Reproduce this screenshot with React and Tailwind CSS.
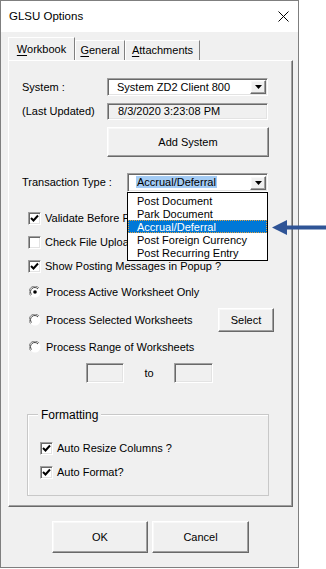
import React from 'react'

const sunken = 'border border-t-[#a0a0a0] border-l-[#a0a0a0] border-r-white border-b-white shadow-[inset_1px_1px_0_#696969,inset_-1px_-1px_0_#e3e3e3]'
const raised = 'border border-t-white border-l-white border-r-[#696969] border-b-[#696969] shadow-[inset_-1px_-1px_0_#a0a0a0,inset_1px_1px_0_#f8f8f8] bg-[#f0f0f0]'

function DropButton() {
  return (
    <div className={`flex h-[14px] w-[16px] items-center justify-center ${raised}`}>
      <svg width="7" height="4" viewBox="0 0 7 4">
        <polygon points="0,0 7,0 3.5,4" fill="#000" />
      </svg>
    </div>
  )
}

function Check({ checked }) {
  return (
    <div className={`flex h-[13px] w-[13px] shrink-0 items-center justify-center bg-white ${sunken}`}>
      {checked && (
        <svg width="9" height="9" viewBox="0 0 9 9">
          <polyline points="1,4 3.5,6.5 8,1.5" fill="none" stroke="#000" strokeWidth="2" />
        </svg>
      )}
    </div>
  )
}

function Radio({ checked }) {
  return (
    <svg width="12" height="12" viewBox="0 0 12 12" className="shrink-0">
      <circle cx="6" cy="6" r="5.5" fill="#fff" />
      <path d="M10 2 A5.5 5.5 0 0 0 1.5 9.5" fill="none" stroke="#808080" strokeWidth="1" />
      <path d="M9 3 A4.2 4.2 0 0 0 2.5 8.5" fill="none" stroke="#404040" strokeWidth="1" />
      {checked && <circle cx="6" cy="6" r="1.8" fill="#000" />}
    </svg>
  )
}

// clip: label is partly covered by the open dropdown list, so cut it at the list edge
function CheckRow({ checked, label, className = '', clip }) {
  return (
    <div className={`flex h-[16px] items-center gap-[4px] ${className}`}>
      <Check checked={checked} />
      <span className={`whitespace-nowrap ${clip ? 'max-w-[82px] overflow-hidden' : ''}`}>{label}</span>
    </div>
  )
}

function RadioRow({ checked, label }) {
  return (
    <div className="flex h-[16px] items-center gap-[5px] pl-[7px]">
      <Radio checked={checked} />
      <span className="whitespace-nowrap">{label}</span>
    </div>
  )
}

function Tab({ label, selected }) {
  const [first, ...rest] = label
  return (
    <div
      className={`flex items-center justify-center border-t border-l border-t-white border-l-white border-r border-r-[#808080] ${
        selected ? 'h-[23px]' : 'h-[20px]'
      }`}
    >
      <span>
        <span className="underline underline-offset-2">{first}</span>
        {rest.join('')}
      </span>
    </div>
  )
}

const options = ['Post Document', 'Park Document', 'Accrual/Deferral', 'Post Foreign Currency', 'Post Recurring Entry']

export default function App() {
  return (
    <div className="relative flex h-[569px] w-[326px] bg-white font-['Liberation_Sans',Arial,sans-serif] text-[11px] text-black">
      <div className="flex h-[568px] w-[299px] flex-col border border-[#7f7f7f]">
        {/* title bar */}
        <div className="flex h-[31px] items-center justify-between bg-white pl-[8px] pr-[9px]">
          <span className="text-[11.5px]">GLSU Options</span>
          <svg width="11" height="11" viewBox="0 0 11 11">
            <path d="M0.5 0.5 L10.5 10.5 M10.5 0.5 L0.5 10.5" stroke="#000" strokeWidth="1" />
          </svg>
        </div>

        <div className="flex flex-1 flex-col bg-[#f0f0f0] pl-[7px] pr-[5px]">
          {/* tabs */}
          <div className="flex h-[28px] items-end">
            <div className="w-[67px]"><Tab label="Workbook" selected /></div>
            <div className="w-[50px]"><Tab label="General" /></div>
            <div className="w-[75px]"><Tab label="Attachments" /></div>
          </div>

          {/* panel */}
          <div className="flex h-[447px] w-[285px] flex-col border border-t-white border-l-white border-r-[#696969] border-b-[#696969] pl-[13px] shadow-[inset_-1px_-1px_0_#a0a0a0]">
            <div className="mt-[17px] flex h-[18px] items-center">
              <span className="w-[85px]">System :</span>
              <div className={`flex h-[18px] w-[161px] items-center bg-white pr-[1px] ${sunken}`}>
                <span className="flex-1 pl-[9px]">System ZD2 Client 800</span>
                <DropButton />
              </div>
            </div>

            <div className="mt-[7px] flex h-[17px] items-center">
              <span className="w-[85px]">(Last Updated)</span>
              <div className={`flex h-[17px] w-[161px] items-center bg-[#f0f0f0] pl-[10px] ${sunken}`}>
                8/3/2020 3:23:08 PM
              </div>
            </div>

            <div className={`ml-[85px] mt-[7px] flex h-[30px] w-[162px] items-center justify-center ${raised}`}>
              Add System
            </div>

            <div className="mt-[16px] flex h-[19px] items-center">
              <span className="w-[105px]">Transaction Type :</span>
              <div className="relative z-10">
                <div className={`flex h-[19px] w-[141px] items-center bg-white pr-[1px] ${sunken}`}>
                  <span className="flex-1 pl-[8px]">
                    <span className="bg-[#a3cbf4] px-[1px]">Accrual/Deferral</span>
                  </span>
                  <DropButton />
                </div>
                <div className="absolute left-0 top-full w-[141px] border border-black bg-white py-[1px]">
                  {options.map((o) => (
                    <div
                      key={o}
                      className={`flex h-[13px] items-center overflow-hidden pl-[9px] leading-[12px] ${
                        o === 'Accrual/Deferral'
                          ? 'bg-[#0078d7] text-white outline-1 outline-dotted outline-[#e0a040] -outline-offset-1'
                          : ''
                      }`}
                    >
                      {o}
                    </div>
                  ))}
                </div>
              </div>
            </div>

            <CheckRow className="ml-[6px] mt-[18px]" checked clip label="Validate Before Posting ?" />
            <CheckRow className="ml-[6px] mt-[8px]" clip label="Check File Upload Status ?" />
            <CheckRow className="ml-[6px] mt-[8px]" checked label="Show Posting Messages in Popup ?" />

            <div className="mt-[10px]">
              <RadioRow checked label="Process Active Worksheet Only" />
            </div>

            <div className="mt-[8px] flex h-[24px] items-center">
              <div className="w-[196px]">
                <RadioRow label="Process Selected Worksheets" />
              </div>
              <div className={`flex h-[24px] w-[56px] items-center justify-center ${raised}`}>Select</div>
            </div>

            <div className="mt-[7px]">
              <RadioRow label="Process Range of Worksheets" />
            </div>

            <div className="ml-[64px] mt-[8px] flex h-[20px] items-center">
              <div className={`h-[20px] w-[38px] bg-[#f0f0f0] ${sunken}`} />
              <span className="w-[50px] text-center">to</span>
              <div className={`h-[20px] w-[39px] bg-[#f0f0f0] ${sunken}`} />
            </div>

            <div className="relative ml-[5px] mt-[31px] h-[82px] w-[242px] border border-[#c8c8c8] pl-[12px] pt-[25px] shadow-[inset_1px_1px_0_#fff]">
              <span className="absolute left-[10px] top-[-9px] bg-[#f0f0f0] px-[3px] text-[12px]">Formatting</span>
              <CheckRow checked label="Auto Resize Columns ?" />
              <CheckRow className="mt-[8px]" checked label="Auto Format?" />
            </div>
          </div>

          {/* buttons */}
          <div className="ml-[44px] mt-[14px] flex gap-[4px]">
            <div className={`flex h-[32px] w-[96px] items-center justify-center ${raised}`}>OK</div>
            <div className={`flex h-[32px] w-[97px] items-center justify-center ${raised}`}>Cancel</div>
          </div>
        </div>
      </div>

      {/* annotation arrow */}
      <svg className="absolute left-[272px] top-[220px]" width="54" height="15" viewBox="0 0 54 15">
        <polygon points="0,7.5 15,0 15,5.5 54,5.5 54,9.5 15,9.5 15,15" fill="#2f5496" />
      </svg>
    </div>
  )
}
